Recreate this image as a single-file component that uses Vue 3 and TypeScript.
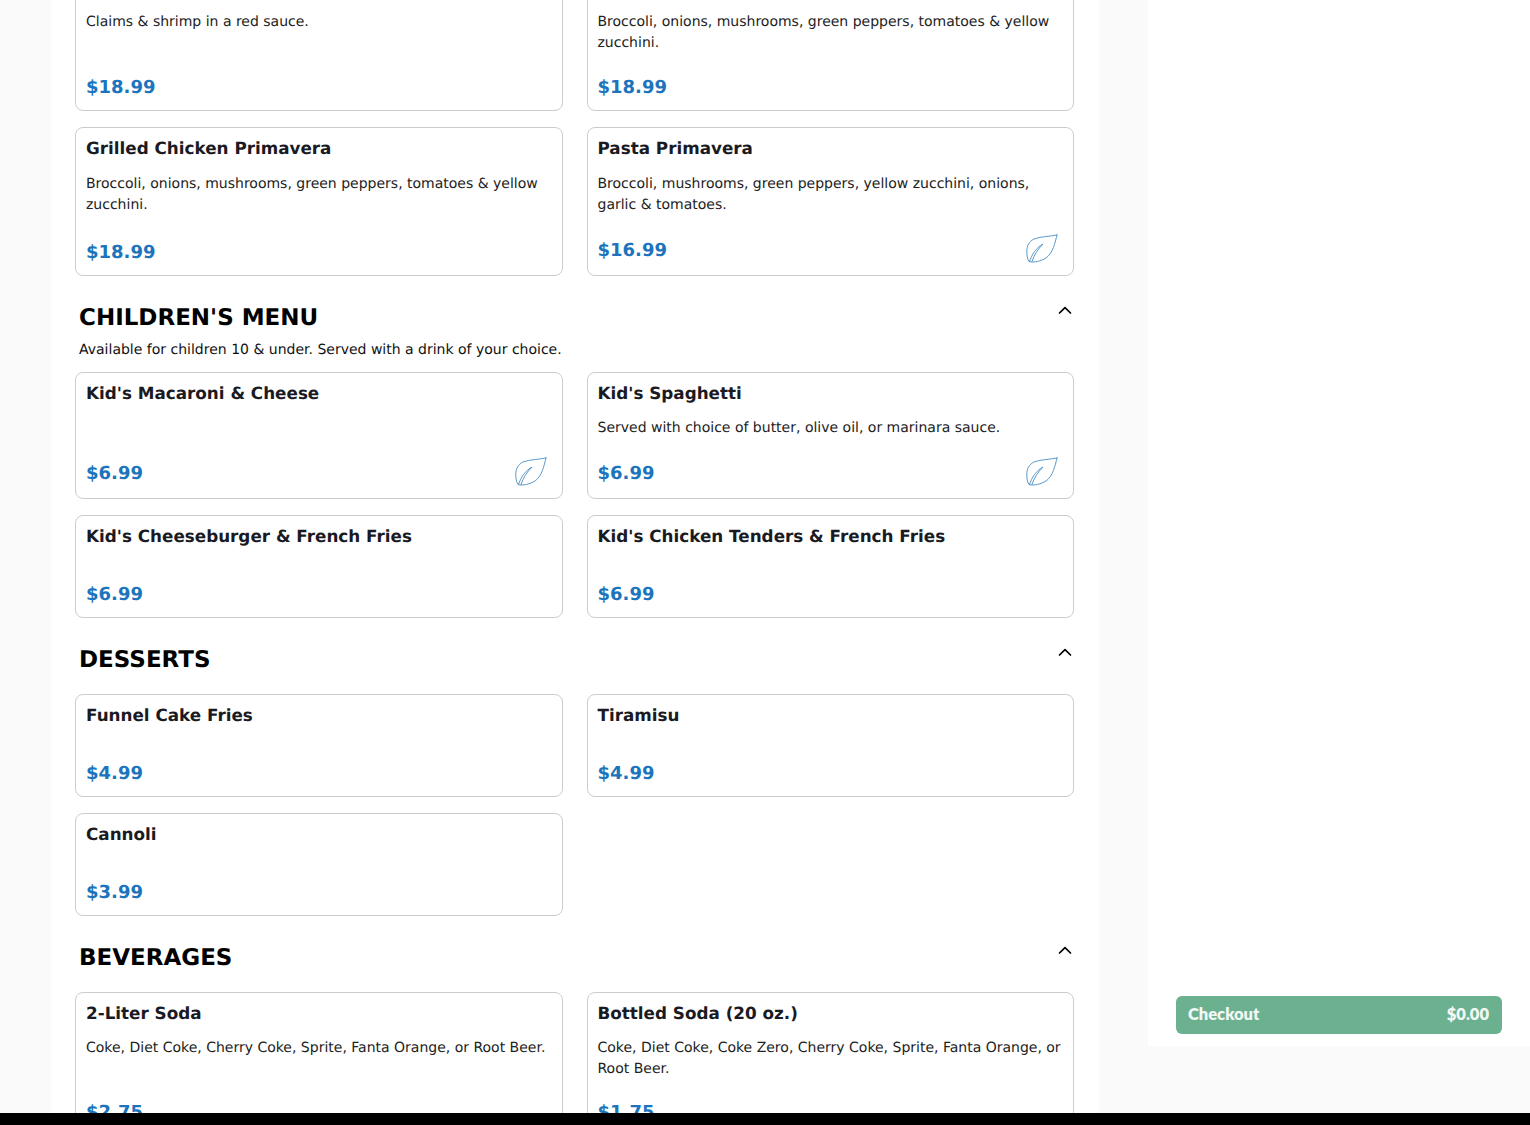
<script setup lang="ts">
interface Item { name: string; desc?: string; price: string; veg?: boolean; roomy?: boolean }
interface Section { title?: string; sub?: string; items: Item[] }

const sections: Section[] = [
  {
    items: [
      { name: 'Shrimp & Clams Marinara', desc: 'Claims & shrimp in a red sauce.', price: '$18.99' },
      { name: 'Shrimp Primavera', desc: 'Broccoli, onions, mushrooms, green peppers, tomatoes & yellow zucchini.', price: '$18.99' },
      { name: 'Grilled Chicken Primavera', desc: 'Broccoli, onions, mushrooms, green peppers, tomatoes & yellow zucchini.', price: '$18.99', roomy: true },
      { name: 'Pasta Primavera', desc: 'Broccoli, mushrooms, green peppers, yellow zucchini, onions, garlic & tomatoes.', price: '$16.99', veg: true, roomy: true },
    ],
  },
  {
    title: "CHILDREN'S MENU",
    sub: 'Available for children 10 & under. Served with a drink of your choice.',
    items: [
      { name: "Kid's Macaroni & Cheese", price: '$6.99', veg: true },
      { name: "Kid's Spaghetti", desc: 'Served with choice of butter, olive oil, or marinara sauce.', price: '$6.99', veg: true },
      { name: "Kid's Cheeseburger & French Fries", price: '$6.99' },
      { name: "Kid's Chicken Tenders & French Fries", price: '$6.99' },
    ],
  },
  {
    title: 'DESSERTS',
    items: [
      { name: 'Funnel Cake Fries', price: '$4.99' },
      { name: 'Tiramisu', price: '$4.99' },
      { name: 'Cannoli', price: '$3.99' },
    ],
  },
  {
    title: 'BEVERAGES',
    items: [
      { name: '2-Liter Soda', desc: 'Coke, Diet Coke, Cherry Coke, Sprite, Fanta Orange, or Root Beer.', price: '$2.75' },
      { name: 'Bottled Soda (20 oz.)', desc: 'Coke, Diet Coke, Coke Zero, Cherry Coke, Sprite, Fanta Orange, or Root Beer.', price: '$1.75' },
    ],
  },
]
</script>

<template>
  <div class="page">
    <div class="viewport">
      <main class="menu">
        <div class="scroller">
          <section v-for="(s, i) in sections" :key="i" class="section" :class="{ lead: i === 0 }">
            <template v-if="s.title">
              <div class="head" :class="{ 'no-sub': !s.sub }">
                <h2 class="heading">{{ s.title }}</h2>
                <svg class="chevron" viewBox="0 0 16 16" width="16" height="16" fill="none" stroke="#000" stroke-width="1.7" stroke-linecap="round" stroke-linejoin="round">
                  <path d="M2.5 11 8 5.6 13.5 11" />
                </svg>
              </div>
              <p v-if="s.sub" class="sub">{{ s.sub }}</p>
            </template>
            <div class="grid">
              <article v-for="item in s.items" :key="item.name" class="card">
                <h3 class="name">{{ item.name }}</h3>
                <p v-if="item.desc" class="desc" :class="{ roomy: item.roomy }">{{ item.desc }}</p>
                <div class="foot">
                  <span class="price">{{ item.price }}</span>
                  <svg v-if="item.veg" class="leaf" viewBox="0 0 32 32" width="32" height="32" fill="none" stroke="#4a8dc2" stroke-width="0.9" stroke-linecap="round" stroke-linejoin="round">
                    <path d="M31 2C24 3.5 14 3.5 8 6C3 8.5 0.8 13 0.8 18C0.8 22 1.2 26 3 28.5C8 30 15 28 20 25C27 20 29 10 31 2Z" />
                    <path d="M3.5 28.5C6 21 10 15 17 11C12 16 8 22 6 28.5" />
                  </svg>
                </div>
              </article>
            </div>
          </section>
        </div>
      </main>
      <aside class="cart">
        <button class="checkout" type="button">
          <span>Checkout</span>
          <span>$0.00</span>
        </button>
      </aside>
    </div>
    <div class="blackbar"></div>
  </div>
</template>

<style>
html, body { margin: 0; background: #fafafa; }
</style>

<style scoped>
.page {
  height: 1125px;
  overflow: hidden;
  display: flex;
  flex-direction: column;
  background: #fafafa;
  font-family: "DejaVu Sans", sans-serif;
  text-rendering: geometricPrecision;
}
.viewport {
  flex: 1;
  min-height: 0;
  display: flex;
  align-items: flex-start;
  padding-left: 51px;
  overflow: hidden;
}
.blackbar { height: 12px; flex: none; background: #000; }
.menu {
  width: 1048px;
  height: 1113px;
  flex: none;
  background: #fff;
  overflow: hidden;
  box-sizing: border-box;
  padding: 0 25px 0 24px;
}
.scroller { margin-top: -34px; }
.section { margin-bottom: 16px; }
.lead .card { min-height: 145px; }
.head {
  display: flex;
  justify-content: space-between;
  align-items: flex-start;
  padding: 10px 1px 0 4px;
}
.head.no-sub { margin-bottom: 18px; }
.heading {
  margin: 0;
  font-size: 23px;
  line-height: 32px;
  font-weight: 700;
  color: #000;
}
.sub {
  margin: 6px 0 12px;
  padding-left: 4px;
  font-size: 14px;
  line-height: 20px;
  color: #111;
}
.grid {
  display: grid;
  grid-template-columns: 1fr 1fr;
  column-gap: 24px;
  row-gap: 16px;
}
.card {
  display: flex;
  flex-direction: column;
  box-sizing: border-box;
  min-height: 103px;
  padding: 10px;
  border: 1px solid #ccc;
  border-radius: 8px;
  background: #fff;
}
.name {
  margin: 0;
  font-size: 16.8px;
  line-height: 20px;
  font-weight: 700;
  color: #1a1a22;
}
.desc {
  margin: 15px 0 17px;
  font-size: 14px;
  line-height: 21px;
  color: #222;
}
.desc.roomy { margin-top: 16px; }
.foot {
  margin-top: auto;
  display: flex;
  justify-content: space-between;
  align-items: center;
}
.price {
  padding-top: 4px;
  font-size: 18px;
  line-height: 24px;
  font-weight: 700;
  color: #1c75bc;
}
.leaf { display: block; margin-right: 5px; }
.cart {
  width: 382px;
  height: 1046px;
  flex: none;
  margin-left: 49px;
  box-sizing: border-box;
  padding: 0 28px 12px;
  background: #fff;
  display: flex;
  flex-direction: column;
  justify-content: flex-end;
}
.checkout {
  height: 38px;
  display: flex;
  justify-content: space-between;
  align-items: center;
  padding: 0 13px 3px 12px;
  border: 0;
  border-radius: 6px;
  background: #6bb08f;
  color: #f2f8f5;
  font-family: "Lato", sans-serif;
  font-size: 16.5px;
  font-weight: 800;
}
</style>
